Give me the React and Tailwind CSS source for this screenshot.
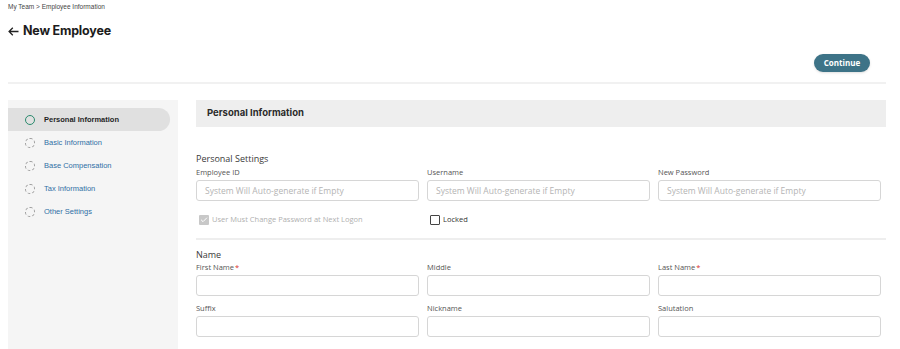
import { Check } from 'lucide-react';

const steps = ['Personal Information', 'Basic Information', 'Base Compensation', 'Tax Information', 'Other Settings'];

function Field({ label, required, placeholder }) {
  return (
    <div>
      <div className="h-[14px] text-[7.5px] leading-[14px] text-[#555]">
        {label}
        {required && <span className="ml-[1px] text-[#d9302c]">*</span>}
      </div>
      <div className="mt-[1px] h-[21px] rounded-[3px] border border-[#d6d6d6] bg-white px-[8px] text-[8.5px] leading-[19px] text-[#b4b4b4]">
        {placeholder}
      </div>
    </div>
  );
}

export default function App() {
  return (
    <div className="h-[349px] overflow-hidden bg-white pl-[8px] pr-[14px]" style={{ fontFamily: '"Open Sans", "Noto Sans", sans-serif' }}>
      {/* Breadcrumb */}
      <div className="pt-[2px] text-[6.5px] leading-[10px] text-[#444]" style={{ fontFamily: '"Liberation Sans", Arial, sans-serif' }}>
        My Team &gt; Employee Information
      </div>

      {/* Title */}
      <div className="mt-[10px] flex h-[18px] items-center gap-[4px] text-[#1c1c1c]" style={{ fontFamily: 'Inter, sans-serif' }}>
        <svg width="11" height="9" viewBox="0 0 11 9" fill="none" stroke="#222" strokeWidth="1.3">
          <path d="M10.5 4.5H1.2M4.8 0.8L1.1 4.5L4.8 8.2" />
        </svg>
        <span className="text-[12.5px] font-bold tracking-[-0.2px]">New Employee</span>
      </div>

      <div className="mt-[14px] flex justify-end pr-[16px]">
        <button className="h-[18px] w-[56px] rounded-full bg-[#3d7387] text-[8px] font-bold text-white shadow-sm">Continue</button>
      </div>

      <div className="mt-[10px] h-[2px] bg-[#f1f1f1]" />

      <div className="mt-[16px] flex">
        {/* Sidebar */}
        <div className="h-[260px] w-[170px] shrink-0 bg-[#f5f5f5] pt-[8px]" style={{ fontFamily: '"Liberation Sans", Arial, sans-serif' }}>
          {steps.map((s, i) => (
            <div
              key={s}
              className={`flex h-[23px] w-[162px] items-center gap-[9px] pl-[17px] text-[7.5px] ${
                i === 0 ? 'rounded-r-full bg-[#e0e0e0] font-bold text-[#1f1f1f]' : 'text-[#2f6fa5]'
              }`}
            >
              {i === 0 ? (
                <span className="h-[10px] w-[10px] rounded-full border-[1.5px] border-[#2b8a6d]" />
              ) : (
                <span className="h-[10px] w-[10px] rounded-full border border-dashed border-[#9a9a9a]" />
              )}
              {s}
            </div>
          ))}
        </div>

        {/* Main */}
        <div className="ml-[18px] flex-1">
          <div className="flex h-[27px] items-center bg-[#eeeeee] px-[11px] text-[9.5px] font-bold text-[#2a2a2a]" style={{ fontFamily: 'Inter, sans-serif' }}>
            Personal Information
          </div>

          <div className="mt-[26px] text-[9px] leading-[12px] text-[#3a3a3a]">Personal Settings</div>
          <div className="grid grid-cols-3 gap-x-[8px] pr-[5px]">
            <Field label="Employee ID" placeholder="System Will Auto-generate if Empty" />
            <Field label="Username" placeholder="System Will Auto-generate if Empty" />
            <Field label="New Password" placeholder="System Will Auto-generate if Empty" />
          </div>

          <div className="mt-[13px] grid grid-cols-3 gap-x-[8px] pr-[5px] text-[7.5px]">
            <div className="flex items-center gap-[3px] pl-[3px] text-[#b0b0b0]">
              <span className="flex h-[10px] w-[10px] items-center justify-center rounded-[1px] bg-[#c8c8c8]">
                <Check size={8} strokeWidth={3} color="#fff" />
              </span>
              User Must Change Password at Next Logon
            </div>
            <div className="flex items-center gap-[3px] pl-[3px] text-[#333]">
              <span className="h-[10px] w-[10px] rounded-[1px] border border-[#444]" />
              Locked
            </div>
          </div>

          <div className="mt-[13px] h-[2px] bg-[#eeeeee]" />

          <div className="mt-[10px] text-[9px] leading-[10px] text-[#3a3a3a]">Name</div>
          <div className="grid grid-cols-3 gap-x-[8px] gap-y-[5px] pr-[5px]">
            <Field label="First Name" required />
            <Field label="Middle" />
            <Field label="Last Name" required />
            <Field label="Suffix" />
            <Field label="Nickname" />
            <Field label="Salutation" />
          </div>
        </div>
      </div>
    </div>
  );
}
